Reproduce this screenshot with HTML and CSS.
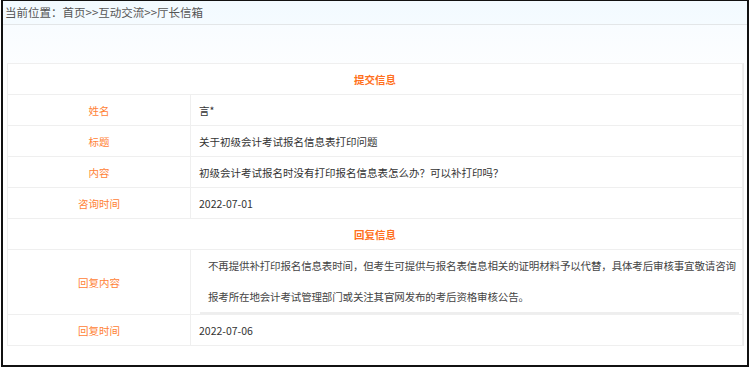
FILE: index.html
```html
<!DOCTYPE html>
<html lang="zh-CN">
<head>
<meta charset="utf-8">
<title>厅长信箱</title>
<link rel="stylesheet" href="styles.css">
</head>
<body>
<div class="frame">
  <div class="crumb">当前位置：首页&gt;&gt;互动交流&gt;&gt;厅长信箱</div>
  <div class="main">
    <table class="info">
      <colgroup><col class="c-label"><col></colgroup>
      <tr class="head"><td colspan="2">提交信息</td></tr>
      <tr><td class="label">姓名</td><td class="val">言*</td></tr>
      <tr><td class="label">标题</td><td class="val">关于初级会计考试报名信息表打印问题</td></tr>
      <tr><td class="label">内容</td><td class="val">初级会计考试报名时没有打印报名信息表怎么办？可以补打印吗？</td></tr>
      <tr><td class="label">咨询时间</td><td class="val">2022-07-01</td></tr>
      <tr class="head"><td colspan="2">回复信息</td></tr>
      <tr><td class="label">回复内容</td><td class="reply-cell"><div class="reply">不再提供补打印报名信息表时间，但考生可提供与报名表信息相关的证明材料予以代替，具体考后审核事宜敬请咨询报考所在地会计考试管理部门或关注其官网发布的考后资格审核公告。</div></td></tr>
      <tr><td class="label">回复时间</td><td class="val">2022-07-06</td></tr>
    </table>
  </div>
</div>
</body>
</html>
```

FILE: styles.css
```css
html, body {
  margin: 0;
  padding: 0;
  background: #ffffff;
}
body {
  font-family: "Noto Sans CJK SC", "Noto Sans", sans-serif;
  color: #333;
}
.frame {
  margin-left: 1px;
  width: 744px;
  height: 364px;
  border: 2px solid #111;
  border-top-width: 1px;
  overflow: hidden;
  background: linear-gradient(#f6fbff 0px, #ffffff 90px);
}
.crumb {
  height: 23px;
  line-height: 23px;
  font-size: 11.5px;
  color: #555;
  padding-left: 2px;
  border-bottom: 1px solid #e3e6e8;
  background: linear-gradient(#f2faff, #f5fbff);
  white-space: nowrap;
}
.main {
  padding: 38px 0 0 4px;
}
.info {
  width: 736px;
  border-collapse: collapse;
  border: 1px solid #ececec;
  box-shadow: 1px 0 0 #ebebeb;
  font-size: 10.5px;
  background: #fff;
}
.c-label {
  width: 183px;
}
.info td {
  border: 1px solid #efefef;
  height: 30px;
  padding: 0;
}
.info .head td {
  text-align: center;
  color: #ff7020;
  font-weight: bold;
}
.info td.label {
  text-align: center;
  color: #ff8236;
}
.info td.val {
  padding-left: 8px;
  color: #333;
}
.info td.reply-cell {
  padding: 0 3px 0 9px;
}
.reply {
  font-size: 10.5px;
  letter-spacing: -0.15px;
  line-height: 31px;
  padding-left: 8px;
  color: #444;
  border-bottom: 2px solid #eeeeee;
}
```
